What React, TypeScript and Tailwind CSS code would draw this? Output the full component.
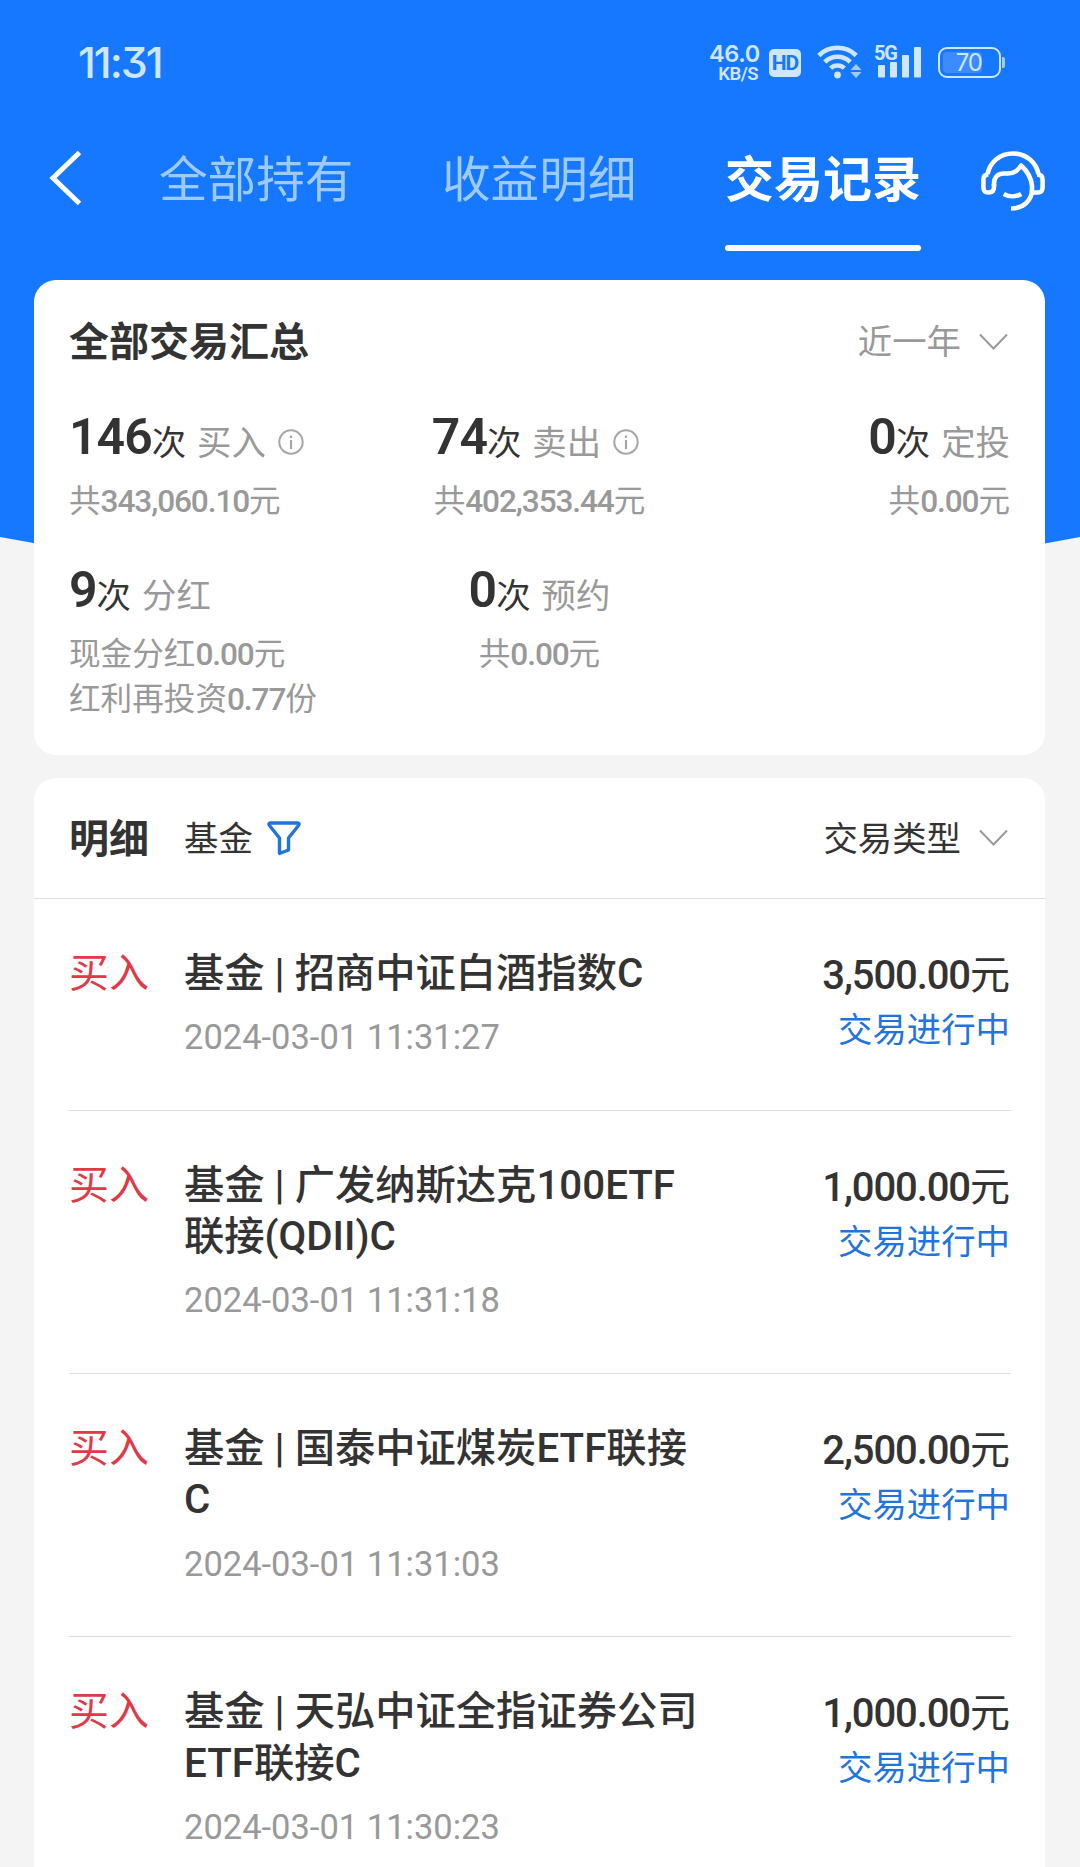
import type { ReactNode } from 'react';

type Item = {
  title: string[];
  time: string;
  amount: string;
};

const items: Item[] = [
  { title: ['基金 | 招商中证白酒指数C'], time: '2024-03-01 11:31:27', amount: '3,500.00' },
  { title: ['基金 | 广发纳斯达克100ETF', '联接(QDII)C'], time: '2024-03-01 11:31:18', amount: '1,000.00' },
  { title: ['基金 | 国泰中证煤炭ETF联接', 'C'], time: '2024-03-01 11:31:03', amount: '2,500.00' },
  { title: ['基金 | 天弘中证全指证券公司', 'ETF联接C'], time: '2024-03-01 11:30:23', amount: '1,000.00' },
];

function StatusBar() {
  return (
    <div className="flex h-[124px] items-start justify-between pl-[78px] pr-[75px] pt-[44px] font-[Inter] text-[#cfe6ff]">
      <span className="mt-[-3px] text-[43px] font-medium leading-[43px] tracking-[-2px] [font-feature-settings:'cv09']">11:31</span>

      <div className="flex items-start">
        <div className="mr-[9px] flex flex-col items-end font-semibold">
          <span className="mt-[-3px] text-[23.5px] leading-[25px] tracking-[-0.3px]">46.0</span>
          <span className="mr-[2px] mt-[-1px] font-[Roboto] text-[18.5px] leading-[19px] tracking-[-0.5px]">KB/S</span>
        </div>

        <span className="mr-[16px] mt-[5px] flex h-[28px] w-[32px] items-center justify-center rounded-[5px] bg-[#cfe6ff] font-[Roboto] text-[21px] font-bold leading-none tracking-[-1px] text-[#1677ff]">
          HD
        </span>

        <svg className="mr-[12px]" width="45" height="35" viewBox="0 0 45 35" fill="none">
          <path d="M1.8 11.5a26.5 26.5 0 0 1 37.4 0" stroke="#cfe6ff" strokeWidth="4.6" />
          <path d="M7.8 18a18 18 0 0 1 25.4 0" stroke="#cfe6ff" strokeWidth="4.6" />
          <path d="M13.6 24.2a10 10 0 0 1 13.8 0" stroke="#cfe6ff" strokeWidth="4.6" />
          <circle cx="20.5" cy="31" r="3.4" fill="#cfe6ff" />
          <path d="M39 20l5.5 6h-11zM39 34l5.5-6h-11z" fill="#9fcbff" />
        </svg>

        <div className="relative mr-[16px] h-[35px] w-[48px]">
          <span className="absolute left-0 top-0 font-[Roboto] text-[20px] font-bold leading-[19px] tracking-[-1.2px]">5G</span>
          <svg width="48" height="35" viewBox="0 0 48 35" fill="#cfe6ff">
            <rect x="4" y="21" width="7" height="12.5" rx="1" />
            <rect x="16" y="18" width="7" height="15.5" rx="1" />
            <rect x="28" y="11" width="7" height="22.5" rx="1" />
            <rect x="40" y="3" width="7" height="30.5" rx="1" />
          </svg>
        </div>

        <div className="mt-[3px] flex items-center">
          <span className="flex h-[31px] w-[63px] items-center rounded-[9px] border-2 border-[#cfe6ff] p-[3px]">
            <span className="flex h-full w-[39px] items-center justify-end rounded-[4px] bg-[#3c8cff] text-[24px] font-normal leading-none tracking-[-1px]">
              70
            </span>
          </span>
          <span className="ml-px h-[11px] w-[3px] rounded-r-[2px] bg-[#9fcbff]" />
        </div>
      </div>
    </div>
  );
}

function Tab({ label, active }: { label: string; active?: boolean }) {
  return (
    <div className="flex w-[196px] flex-col">
      <span className={active ? 'text-[49px] font-bold leading-[113px] text-white' : 'text-[48.6px] leading-[113px] text-[#9dcaff]'}>
        {label}
      </span>
      {active && <span className="mt-[8px] h-[6px] rounded-full bg-white" />}
    </div>
  );
}

function NavBar() {
  return (
    <div className="flex h-[156px] items-start">
      <svg className="ml-[48px] mt-[26px]" width="34" height="56" viewBox="0 0 34 56" fill="none" stroke="#fff" strokeWidth="5">
        <path d="M31.5 2.5L5 28l26.5 25.5" />
      </svg>

      <div className="ml-[77px] flex gap-[87px]">
        <Tab label="全部持有" />
        <Tab label="收益明细" />
        <Tab label="交易记录" active />
      </div>

      <svg
        className="ml-[60px] mt-[27px]"
        width="64"
        height="61"
        viewBox="0 0 64 61"
        fill="none"
        stroke="#fff"
        strokeWidth="4.6"
        strokeLinejoin="round"
      >
        <path d="M6.5 23C9 11 19 2.5 32 2.5S55 11 57.5 23" />
        <path d="M13 35V33C13 26 17 22.5 23 22.5H27C34 22.5 37 19 40.2 14.5C46 20 50.5 27 51 35V38C51 49 43 57.5 30 57.5" />
        <path d="M7.5 23.5C4 23.5 2.4 25.5 2.4 28.5V36C2.4 40 4 41.5 7.5 41.5C11.5 41.5 13 39.5 13 36V33" />
        <path d="M56 23.5C60 23.5 61.6 25.5 61.6 28.5V36C61.6 40 60 41.5 56.5 41.5H51" />
        <path d="M22.8 43C28 46 35 46 40.2 43" />
      </svg>
    </div>
  );
}

function InfoIcon() {
  return (
    <svg className="ml-[12px] mr-[8px] mt-[10px]" width="26" height="26" viewBox="0 0 26 26" fill="none" stroke="#a6a6a6">
      <circle cx="13" cy="13" r="11.7" strokeWidth="2" />
      <path d="M13 11v9M13 6.5v2.5" strokeWidth="2.2" />
    </svg>
  );
}

function ChevronDown() {
  return (
    <svg className="ml-[18px] mr-[2px] mt-[-2px]" width="29" height="18" viewBox="0 0 29 18" fill="none" stroke="#999" strokeWidth="2">
      <path d="M1 1.5L14.5 15.5L28 1.5" />
    </svg>
  );
}

function Num({ children }: { children: ReactNode }) {
  return <span className="font-medium tracking-[-1.1px]">{children}</span>;
}

type StatProps = {
  count: string;
  label: string;
  info?: boolean;
  className: string;
  children: ReactNode;
};

function Stat({ count, label, info, className, children }: StatProps) {
  return (
    <div className={`flex flex-col ${className}`}>
      <div className="flex h-[60px] items-center">
        <span className="text-[50px] font-semibold leading-[60px] tracking-[-1px]">{count}</span>
        <span className="mt-[11px] text-[34.4px] leading-[52px]">次</span>
        <span className="ml-[11px] mt-[11px] text-[34.4px] leading-[52px] text-[#999]">{label}</span>
        {info && <InfoIcon />}
      </div>
      <div className="mt-[12px] text-[31.6px] leading-[45px] text-[#999]">{children}</div>
    </div>
  );
}

function Summary() {
  return (
    <section className="mx-[34px] h-[475px] w-[1011px] rounded-[22px] bg-white px-[35px]">
      <div className="flex h-[122px] items-center justify-between pt-[4px]">
        <h2 className="text-[40px] font-bold">全部交易汇总</h2>
        <div className="flex items-center text-[34.4px] text-[#999]">
          近一年
          <ChevronDown />
        </div>
      </div>

      <div className="mt-[5px] grid grid-cols-3 gap-y-[36px]">
        <Stat count="146" label="买入" info className="items-start">
          共<Num>343,060.10</Num>元
        </Stat>
        <Stat count="74" label="卖出" info className="items-center">
          共<Num>402,353.44</Num>元
        </Stat>
        <Stat count="0" label="定投" className="items-end">
          共<Num>0.00</Num>元
        </Stat>
        <Stat count="9" label="分红" className="items-start">
          现金分红<Num>0.00</Num>元
          <br />
          红利再投资<Num>0.77</Num>份
        </Stat>
        <Stat count="0" label="预约" className="items-center">
          共<Num>0.00</Num>元
        </Stat>
      </div>
    </section>
  );
}

function Record({ item }: { item: Item }) {
  return (
    <li className="ml-[35px] mr-[34px] flex items-start border-b border-[#ddd] pb-[45.8px] pr-px pt-[49px]">
      <span className="w-[115px] text-[40px] leading-[52px] text-[#e03a48]">买入</span>

      <div className="flex flex-1 flex-col">
        {item.title.map((line) => (
          <span key={line} className="whitespace-nowrap text-[40.3px] font-medium leading-[51.2px]">
            {line}
          </span>
        ))}
        <time className="mt-[11px] text-[34.5px] leading-[54px] text-[#999]">{item.time}</time>
      </div>

      <div className="flex flex-col items-end">
        <span className="text-[40px] leading-[56px]">
          <Num>{item.amount}</Num>元
        </span>
        <span className="text-[34.4px] leading-[52px] text-[#1f74dd]">交易进行中</span>
      </div>
    </li>
  );
}

function Details() {
  return (
    <section className="mx-[34px] mt-[23px] w-[1011px] rounded-t-[22px] bg-white">
      <div className="flex h-[121px] items-center border-b border-[#ddd] px-[35px] pt-[3px] text-[34.4px]">
        <h2 className="w-[115px] text-[40px] font-bold">明细</h2>
        <span>基金</span>
        <svg className="ml-[14px] mt-[-3px]" width="34" height="35" viewBox="0 0 34 35" fill="none" stroke="#1f74dd" strokeWidth="3.4" strokeLinejoin="round">
          <path d="M3.5 2H30.5Q33 2 31.5 4.5L21.5 17V29L12.5 32.5V17L2.5 4.5Q1 2 3.5 2Z" />
        </svg>
        <div className="ml-auto flex items-center">
          交易类型
          <ChevronDown />
        </div>
      </div>

      <ul>
        {items.map((item) => (
          <Record key={item.time} item={item} />
        ))}
      </ul>
    </section>
  );
}

export default function App() {
  return (
    <div className="relative h-[1867px] w-[1080px] overflow-hidden bg-[#f4f4f4] font-[Roboto,'Noto_Sans_CJK_SC',sans-serif] text-[#333]">
      {/* curved header backdrop, runs behind the summary card */}
      <svg className="absolute left-0 top-0" width="1080" height="600" viewBox="0 0 1080 600" fill="#1677ff">
        <path d="M0 0H1080V537Q540 640 0 537Z" />
      </svg>

      <div className="relative">
        <StatusBar />
        <NavBar />
        <Summary />
        <Details />
      </div>
    </div>
  );
}
